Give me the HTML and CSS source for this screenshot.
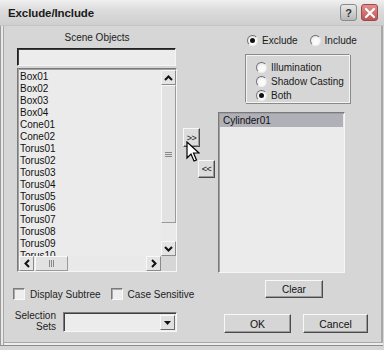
FILE: index.html
```html
<!DOCTYPE html>
<html>
<head>
<meta charset="utf-8">
<link rel="stylesheet" href="styles.css">
</head>
<body>
<div class="win">
  <div class="titlebar">
    <span class="title">Exclude/Include</span>
    <div class="tbtns">
      <span class="tb help">?</span>
      <span class="tb close"><svg width="12" height="12" viewBox="0 0 12 12"><path d="M2 2L10 10M10 2L2 10" stroke="#fff" stroke-width="2.2" stroke-linecap="round"/></svg></span>
    </div>
  </div>
  <div class="main">
    <div class="colL">
      <div class="scene-lbl">Scene Objects</div>
      <div class="search"></div>
      <div class="list llist">
        <div class="items">
          <div>Box01</div><div>Box02</div><div>Box03</div><div>Box04</div>
          <div>Cone01</div><div>Cone02</div>
          <div>Torus01</div><div>Torus02</div><div>Torus03</div><div>Torus04</div><div>Torus05</div>
          <div>Torus06</div><div>Torus07</div><div>Torus08</div><div>Torus09</div><div>Torus10</div>
        </div>
        <div class="vscroll">
          <div class="sbtn"><svg width="9" height="6" viewBox="0 0 9 6"><path d="M1 5L4.5 1.5L8 5" fill="none" stroke="#111" stroke-width="2"/></svg></div>
          <div class="vtrack"><div class="vthumb"><svg width="7" height="5" viewBox="0 0 7 5"><path d="M0 0.5H7M0 2.5H7M0 4.5H7" stroke="#888" stroke-width="1"/></svg></div></div>
          <div class="sbtn"><svg width="9" height="6" viewBox="0 0 9 6"><path d="M1 1L4.5 4.5L8 1" fill="none" stroke="#111" stroke-width="2"/></svg></div>
        </div>
        <div class="hscroll">
          <div class="sbtn"><svg width="6" height="9" viewBox="0 0 6 9"><path d="M5 1L1.5 4.5L5 8" fill="none" stroke="#111" stroke-width="2"/></svg></div>
          <div class="hthumb"><svg width="5" height="7" viewBox="0 0 5 7"><path d="M0.5 0V7M2.5 0V7M4.5 0V7" stroke="#888" stroke-width="1"/></svg></div>
          <div class="htrack"></div>
          <div class="sbtn"><svg width="6" height="9" viewBox="0 0 6 9"><path d="M1 1L4.5 4.5L1 8" fill="none" stroke="#111" stroke-width="2"/></svg></div>
        </div>
        <div class="corner"></div>
      </div>
      <div class="checks">
        <span class="chk"></span><span class="chk-lbl">Display Subtree</span>
        <span class="chk chk2"></span><span class="chk-lbl">Case Sensitive</span>
      </div>
      <div class="selsets">
        <div class="sel-lbl">Selection<br>Sets</div>
        <div class="combo"><div class="combo-btn"><svg width="7" height="4" viewBox="0 0 7 4"><path d="M0 0H7L3.5 4Z" fill="#111"/></svg></div></div>
      </div>
    </div>
    <div class="colM">
      <div class="btn mv add">&gt;&gt;</div>
      <div class="btn mv rem">&lt;&lt;</div>
    </div>
    <div class="colR">
      <div class="mode">
        <span class="radio on"></span><span class="rlbl">Exclude</span>
        <span class="radio r2"></span><span class="rlbl">Include</span>
      </div>
      <div class="group">
        <div class="grow"><span class="radio"></span><span class="rlbl">Illumination</span></div>
        <div class="grow"><span class="radio"></span><span class="rlbl">Shadow Casting</span></div>
        <div class="grow"><span class="radio on"></span><span class="rlbl">Both</span></div>
      </div>
      <div class="list rlist">
        <div class="sel">Cylinder01</div>
      </div>
      <div class="btn clear">Clear</div>
      <div class="okrow">
        <div class="btn ok">OK</div>
        <div class="btn cancel">Cancel</div>
      </div>
    </div>
  </div>
  <svg class="cursor" width="14" height="22" viewBox="0 0 14 22"><path d="M1 1V17L5 13L8 20L10.5 19L7.5 12H13Z" fill="#fff" stroke="#000" stroke-width="1.2" stroke-linejoin="miter"/></svg>
</div>
</body>
</html>
```
FILE: styles.css
```css
* { box-sizing: border-box; }
html, body { margin: 0; padding: 0; }
body { width: 384px; height: 350px; overflow: hidden; background: #d6d6d6; }
.win {
  position: relative;
  width: 384px; height: 350px;
  background: #d6d6d6;
  font-family: "Liberation Sans", Arial, sans-serif;
  font-size: 10px;
  color: #111;
  white-space: nowrap;
}
.titlebar {
  height: 26px;
  display: flex; align-items: center; justify-content: space-between;
  padding: 0 6px 0 8px;
  background: linear-gradient(#f0f0f0, #dcdcdc 40%, #cfcfcf);
  border-bottom: 1px solid #c4c4c4;
}
.title { font-size: 11.5px; font-weight: bold; color: #1a1a1a; letter-spacing: -0.1px; }
.tbtns { display: flex; gap: 4px; }
.tb {
  width: 17px; height: 17px; border-radius: 3px;
  display: flex; align-items: center; justify-content: center;
  font-weight: bold; font-size: 11px;
}
.help { background: linear-gradient(#e8e8e8, #b8b8b8); border: 1px solid #8a8a8a; color: #333; }
.close { background: linear-gradient(#e09090, #c05454); border: 1px solid #a04848; }

.main {
  display: flex;
  height: 320px;
  border-left: 1px solid #9a9a9a;
  border-bottom: 1px solid #8c8c8c;
  box-shadow: inset 2px 0 0 #e8e8e8, inset 3px 0 0 #a8a8a8, inset 0 -2px 0 #eeeeee, inset 0 -3px 0 #a8a8a8, inset -2px 0 0 #a8a8a8;
  margin-right: 1px;
}
.colL { width: 164px; margin-left: 12px; display: flex; flex-direction: column; }
.scene-lbl { margin-top: 6px; padding-left: 4px; height: 12px; line-height: 12px; text-align: center; color: #222; }
.search {
  margin: 4px 0 0 4px; width: 159px; height: 18px;
  background: #ececec;
  border: 1px solid; border-color: #202020 #f4f4f4 #f4f4f4 #202020;
  box-shadow: inset 1px 1px 0 #404040;
}
.list {
  background: #ebebeb;
  border: 1px solid; border-color: #7a7a7a #f6f6f6 #f6f6f6 #7a7a7a;
  box-shadow: inset 1px 1px 0 #a0a0a0;
}
.llist {
  margin: 2px 0 0 4px; width: 160px; height: 204px;
  display: grid; grid-template-columns: 1fr 15px; grid-template-rows: minmax(0, 1fr) 15px;
  padding: 1px 0 0 1px;
}
.items { padding: 1px 0 0 1px; line-height: 11.95px; overflow: hidden; color: #111; min-height: 0; }
.vscroll { display: flex; flex-direction: column; min-height: 0; }
.sbtn {
  width: 15px; height: 15px; flex: none;
  background: #e4e4e4;
  border: 1px solid; border-color: #f8f8f8 #8a8a8a #8a8a8a #f8f8f8;
  display: flex; align-items: center; justify-content: center;
}
.vtrack { flex: 1; background: #e9e9e9; padding-bottom: 18px; }
.vthumb {
  height: 100%; background: #e2e2e2;
  border: 1px solid; border-color: #f8f8f8 #9a9a9a #9a9a9a #f8f8f8;
  display: flex; align-items: center; justify-content: center;
}
.hscroll { display: flex; }
.hthumb {
  width: 33px; margin-left: 1px; background: #e2e2e2;
  border: 1px solid; border-color: #f8f8f8 #9a9a9a #9a9a9a #f8f8f8;
  display: flex; align-items: center; justify-content: center;
}
.htrack { flex: 1; background: #e9e9e9; }
.corner { background: #d6d6d6; }

.checks { margin-top: 16px; display: flex; align-items: center; height: 12px; }
.chk {
  width: 12px; height: 12px; flex: none; background: #eeeeee;
  border: 1px solid; border-color: #7a7a7a #f8f8f8 #f8f8f8 #7a7a7a;
  box-shadow: inset 1px 1px 0 #a8a8a8;
}
.chk-lbl { margin-left: 5px; color: #222; flex: none; }
.chk2 { margin-left: 10px; }
.selsets { margin-top: 11px; display: flex; align-items: flex-start; }
.sel-lbl { width: 43px; flex: none; text-align: right; line-height: 10.5px; color: #222; }
.combo {
  margin: 1px 0 0 7px; width: 115px; height: 20px;
  background: #ececec;
  border: 1px solid; border-color: #7a7a7a #f8f8f8 #f8f8f8 #7a7a7a;
  box-shadow: inset 1px 1px 0 #404040;
  display: flex; justify-content: flex-end; padding: 2px 1px 1px 0;
}
.combo-btn {
  width: 15px; height: 15px; background: #e0e0e0;
  border: 1px solid; border-color: #f8f8f8 #6a6a6a #6a6a6a #f8f8f8;
  display: flex; align-items: center; justify-content: center;
}

.btn {
  background: #d6d6d6;
  border: 1px solid; border-color: #f8f8f8 #4a4a4a #4a4a4a #f8f8f8;
  box-shadow: inset -1px -1px 0 #9a9a9a;
  display: flex; align-items: center; justify-content: center;
  color: #111;
}
.colM { width: 41px; display: flex; flex-direction: column; }
.mv { width: 17px; font-size: 9px; letter-spacing: -0.5px; background: #dcdcdc; }
.add { margin: 102px 0 0 6px; height: 19px; }
.rem { margin: 13px 0 0 21px; height: 18px; }

.colR { width: 152px; display: flex; flex-direction: column; }
.mode { margin-top: 9px; padding-left: 29px; display: flex; align-items: center; height: 11px; }
.radio {
  width: 11px; height: 11px; border-radius: 50%; flex: none;
  background: radial-gradient(circle at 60% 65%, #fafafa 40%, #d8d8d8);
  border: 1px solid; border-color: #6a6a6a #e8e8e8 #f0f0f0 #7a7a7a;
  position: relative;
}
.radio.on::after {
  content: ""; position: absolute; left: 2px; top: 2px;
  width: 5px; height: 5px; border-radius: 50%; background: #111;
}
.rlbl { margin-left: 4px; color: #1a1a1a; }
.r2 { margin-left: 12px; }
.group {
  margin: 8px 0 0 27px; width: 105px; height: 49px;
  border: 1px solid; border-color: #8a8a8a #f4f4f4 #f4f4f4 #8a8a8a;
  box-shadow: inset 1px 1px 0 #f4f4f4, 1px 1px 0 #8a8a8a;
  padding: 7px 0 0 10px;
  display: flex; flex-direction: column; gap: 3px;
}
.grow { display: flex; align-items: center; height: 11px; }
.rlist { margin-top: 9px; width: 127px; height: 161px; padding: 1px 1px 0 1px; }
.sel { background: #b0b0b8; height: 13px; line-height: 13px; padding-left: 3px; color: #111; }
.clear { margin: 7px 0 0 47px; width: 58px; height: 18px; }
.okrow { margin-top: 16px; display: flex; }
.ok { margin-left: 6px; width: 67px; height: 19px; font-size: 10.5px; }
.cancel { margin-left: 12px; width: 65px; height: 19px; font-size: 10.5px; }

.cursor { position: absolute; left: 186px; top: 141px; }
```
